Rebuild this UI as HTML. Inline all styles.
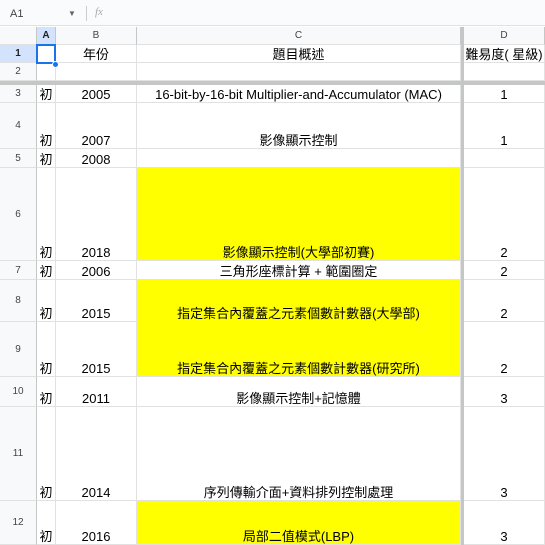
<!DOCTYPE html><html><head><meta charset="utf-8"><style>
body{margin:0;width:545px;height:545px;overflow:hidden;background:#fff;font-family:"Liberation Sans","Noto Sans CJK TC",sans-serif;position:relative}
div{box-sizing:border-box}
.a{position:absolute}
.c{position:absolute;display:flex;align-items:flex-end;justify-content:center;font-size:13px;color:#000;padding-bottom:0px;line-height:15px;border-right:1px solid #e1e1e1;border-bottom:1px solid #e1e1e1;white-space:nowrap}
.h{position:absolute;display:flex;align-items:center;justify-content:center;font-size:10px;color:#444;background:#f8f9fa;border-right:1px solid #c4c7c5;border-bottom:1px solid #e1e1e1}
.y{background:#ffff00}
</style></head><body>
<div class="a" style="left:0;top:0;width:545px;height:26px;background:#f9fbfd;border-bottom:1px solid #e1e1e1"></div>
<div class="a" style="left:10px;top:8px;font-size:11px;color:#444">A1</div>
<div class="a" style="left:68px;top:9px;font-size:8px;color:#666">▼</div>
<div class="a" style="left:86px;top:6px;width:1px;height:15px;background:#ccc"></div>
<div class="a" style="left:95px;top:6px;font-size:11px;color:#aaa;font-style:italic;font-family:'Liberation Serif',serif">fx</div>
<div class="h" style="left:0;top:27px;width:37px;height:18px"></div>
<div class="h" style="left:37px;top:27px;width:19px;height:18px;background:#d3e3fd;font-weight:bold;color:#222">A</div>
<div class="h" style="left:56px;top:27px;width:81px;height:18px">B</div>
<div class="h" style="left:137px;top:27px;width:324px;height:18px">C</div>
<div class="h" style="left:464px;top:27px;width:81px;height:18px">D</div>
<div class="h" style="left:0;top:45px;width:37px;height:18px;background:#d3e3fd;font-weight:bold;color:#222">1</div>
<div class="h" style="left:0;top:63px;width:37px;height:18px">2</div>
<div class="c" style="left:37px;top:45px;width:19px;height:18px"></div>
<div class="c" style="left:56px;top:45px;width:81px;height:18px">年份</div>
<div class="c" style="left:137px;top:45px;width:324px;height:18px">題目概述</div>
<div class="c" style="left:464px;top:45px;width:81px;height:18px">難易度( 星級)</div>
<div class="c" style="left:37px;top:63px;width:19px;height:18px"></div>
<div class="c" style="left:56px;top:63px;width:81px;height:18px"></div>
<div class="c" style="left:137px;top:63px;width:324px;height:18px"></div>
<div class="c" style="left:464px;top:63px;width:81px;height:18px"></div>
<div class="a" style="left:0;top:81px;width:545px;height:4px;background:#c4c7c5"></div>
<div class="a" style="left:461px;top:27px;width:3px;height:518px;background:#c4c7c5"></div>

<div class="h" style="left:0;top:85px;width:37px;height:18px">3</div>
<div class="c" style="left:37px;top:85px;width:19px;height:18px">初</div>
<div class="c" style="left:56px;top:85px;width:81px;height:18px">2005</div>
<div class="c" style="left:137px;top:85px;width:324px;height:18px">16-bit-by-16-bit Multiplier-and-Accumulator (MAC)</div>
<div class="c" style="left:464px;top:85px;width:81px;height:18px">1</div>

<div class="h" style="left:0;top:103px;width:37px;height:46px">4</div>
<div class="c" style="left:37px;top:103px;width:19px;height:46px">初</div>
<div class="c" style="left:56px;top:103px;width:81px;height:46px">2007</div>
<div class="c" style="left:137px;top:103px;width:324px;height:46px">影像顯示控制</div>
<div class="c" style="left:464px;top:103px;width:81px;height:46px">1</div>

<div class="h" style="left:0;top:149px;width:37px;height:19px">5</div>
<div class="c" style="left:37px;top:149px;width:19px;height:19px">初</div>
<div class="c" style="left:56px;top:149px;width:81px;height:19px">2008</div>
<div class="c" style="left:137px;top:149px;width:324px;height:19px"></div>
<div class="c" style="left:464px;top:149px;width:81px;height:19px"></div>

<div class="h" style="left:0;top:168px;width:37px;height:93px">6</div>
<div class="c" style="left:37px;top:168px;width:19px;height:93px">初</div>
<div class="c" style="left:56px;top:168px;width:81px;height:93px">2018</div>
<div class="c y" style="left:137px;top:168px;width:324px;height:93px">影像顯示控制(大學部初賽)</div>
<div class="c" style="left:464px;top:168px;width:81px;height:93px">2</div>

<div class="h" style="left:0;top:261px;width:37px;height:19px">7</div>
<div class="c" style="left:37px;top:261px;width:19px;height:19px">初</div>
<div class="c" style="left:56px;top:261px;width:81px;height:19px">2006</div>
<div class="c" style="left:137px;top:261px;width:324px;height:19px">三角形座標計算 + 範圍圈定</div>
<div class="c" style="left:464px;top:261px;width:81px;height:19px">2</div>

<div class="h" style="left:0;top:280px;width:37px;height:42px">8</div>
<div class="c" style="left:37px;top:280px;width:19px;height:42px">初</div>
<div class="c" style="left:56px;top:280px;width:81px;height:42px">2015</div>
<div class="c y" style="left:137px;top:280px;width:324px;height:42px">指定集合內覆蓋之元素個數計數器(大學部)</div>
<div class="c" style="left:464px;top:280px;width:81px;height:42px">2</div>

<div class="h" style="left:0;top:322px;width:37px;height:55px">9</div>
<div class="c" style="left:37px;top:322px;width:19px;height:55px">初</div>
<div class="c" style="left:56px;top:322px;width:81px;height:55px">2015</div>
<div class="c y" style="left:137px;top:322px;width:324px;height:55px">指定集合內覆蓋之元素個數計數器(研究所)</div>
<div class="c" style="left:464px;top:322px;width:81px;height:55px">2</div>

<div class="h" style="left:0;top:377px;width:37px;height:30px">10</div>
<div class="c" style="left:37px;top:377px;width:19px;height:30px">初</div>
<div class="c" style="left:56px;top:377px;width:81px;height:30px">2011</div>
<div class="c" style="left:137px;top:377px;width:324px;height:30px">影像顯示控制+記憶體</div>
<div class="c" style="left:464px;top:377px;width:81px;height:30px">3</div>

<div class="h" style="left:0;top:407px;width:37px;height:94px">11</div>
<div class="c" style="left:37px;top:407px;width:19px;height:94px">初</div>
<div class="c" style="left:56px;top:407px;width:81px;height:94px">2014</div>
<div class="c" style="left:137px;top:407px;width:324px;height:94px">序列傳輸介面+資料排列控制處理</div>
<div class="c" style="left:464px;top:407px;width:81px;height:94px">3</div>

<div class="h" style="left:0;top:501px;width:37px;height:44px">12</div>
<div class="c" style="left:37px;top:501px;width:19px;height:44px">初</div>
<div class="c" style="left:56px;top:501px;width:81px;height:44px">2016</div>
<div class="c y" style="left:137px;top:501px;width:324px;height:44px">局部二值模式(LBP)</div>
<div class="c" style="left:464px;top:501px;width:81px;height:44px">3</div>

<div class="a" style="left:36px;top:44px;width:20px;height:20px;border:2px solid #1a73e8"></div>
<div class="a" style="left:52px;top:61px;width:7px;height:7px;border-radius:50%;background:#1a73e8;border:1px solid #fff"></div>
</body></html>
